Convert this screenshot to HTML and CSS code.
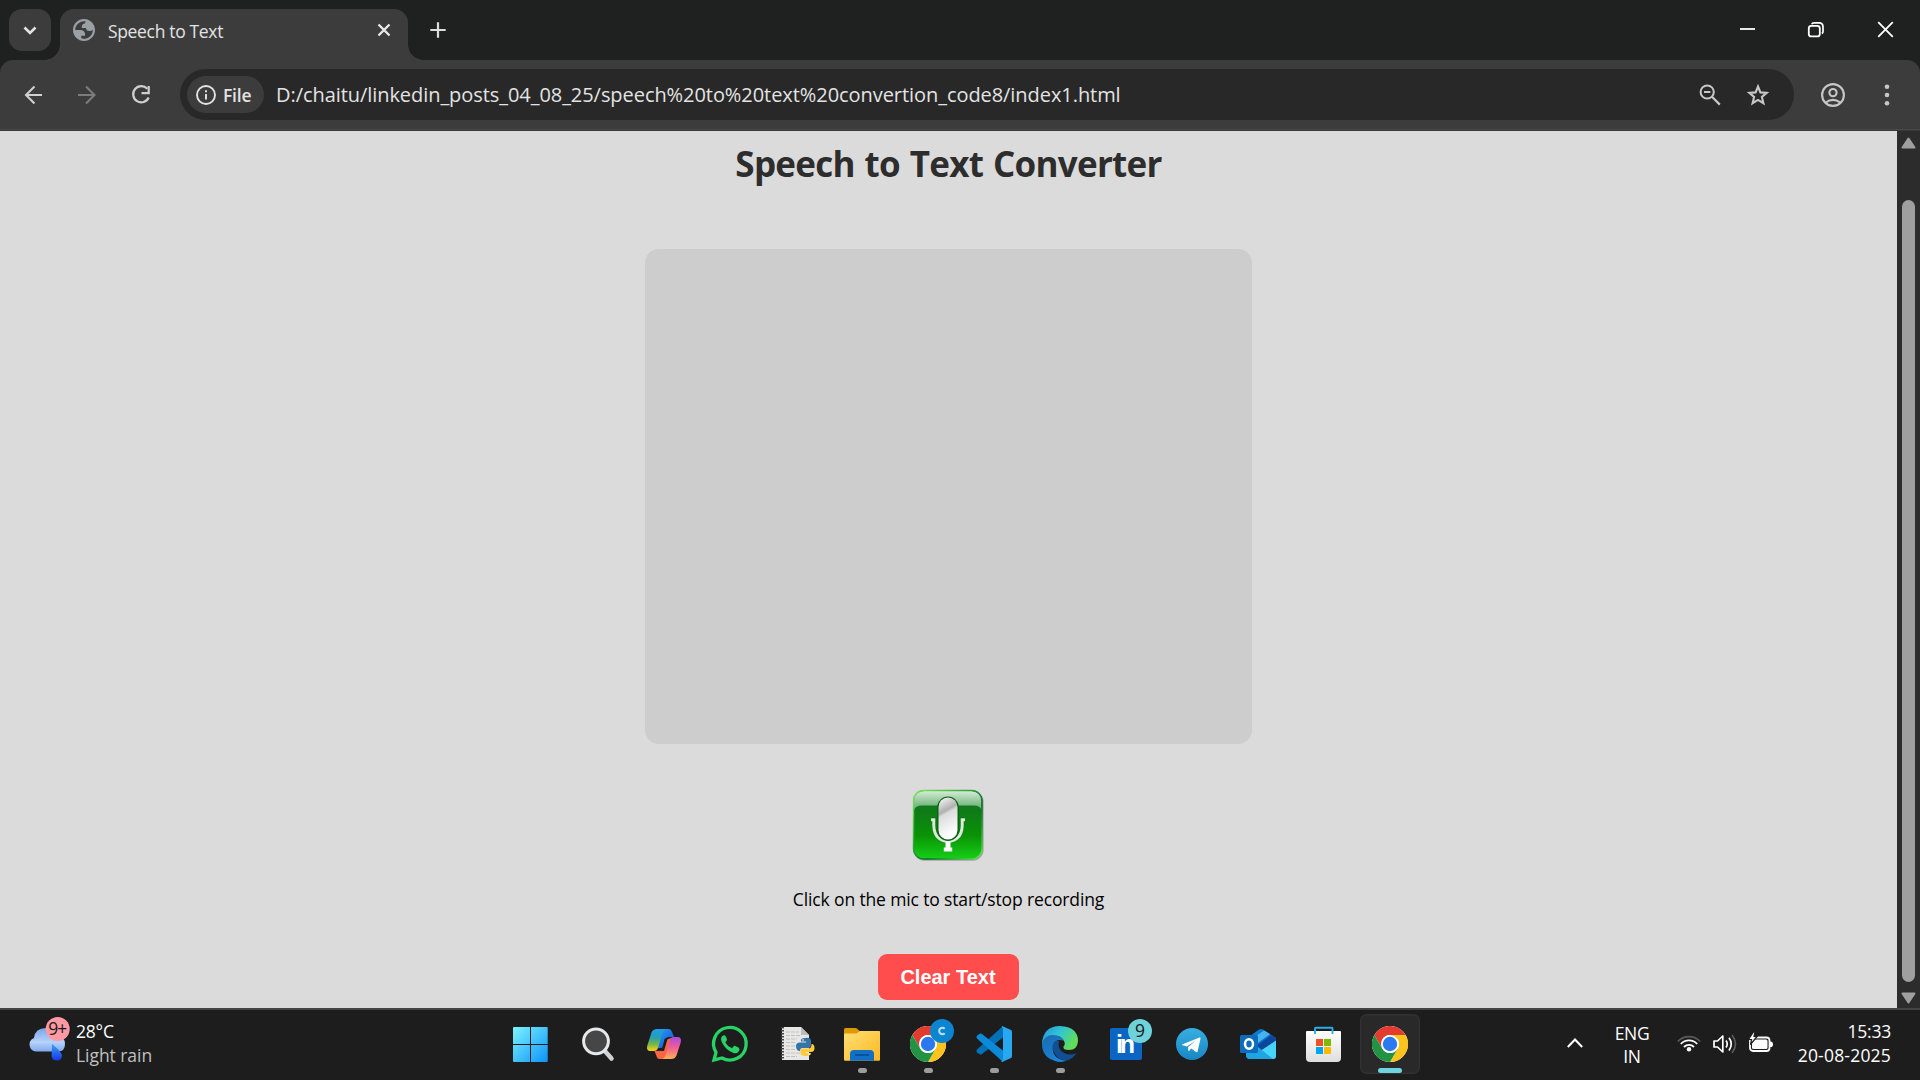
FILE: index.html
```html
<!DOCTYPE html>
<html lang="en">
<head>
<meta charset="utf-8">
<title>Speech to Text</title>
<link rel="stylesheet" href="styles.css">
</head>
<body>
<svg class="defs" width="0" height="0" aria-hidden="true">
  <defs>
    <linearGradient id="win" x1="0" y1="0" x2="1" y2="1"><stop offset="0" stop-color="#7cf3ff"/><stop offset="1" stop-color="#0c93f8"/></linearGradient>
    <symbol id="chrome" viewBox="0 0 48 48">
      <circle cx="24" cy="24" r="24" fill="#fff"/>
      <path d="M3.2 12A24 24 0 0 1 44.8 12H24A12 12 0 0 0 13.6 18L13.6 30Z" fill="#e33b2e"/>
      <path d="M44.8 12A24 24 0 0 1 24 48L34.4 30A12 12 0 0 0 34.4 18L24 12Z" fill="#fcc31c"/>
      <path d="M24 48A24 24 0 0 1 3.2 12L13.6 30A12 12 0 0 0 34.4 30Z" fill="#229342"/>
      <circle cx="24" cy="24" r="12" fill="#fff"/>
      <circle cx="24" cy="24" r="9.6" fill="#2a79ee"/>
    </symbol>
  </defs>
</svg>

<header class="tabstrip">
  <button class="tab-search" aria-label="Search tabs">
    <svg width="42" height="42" viewBox="0 0 42 42"><path d="M15.5 18.5L21 24L26.5 18.5" fill="none" stroke="#e3e3e3" stroke-width="2.6"/></svg>
  </button>
  <div class="tab">
    <svg class="globe" width="22" height="22" viewBox="2 2 20 20">
      <path d="M12 2C6.48 2 2 6.48 2 12s4.48 10 10 10 10-4.48 10-10S17.52 2 12 2zM4 12h4.400c3.407.022 4.922 1.730 4.543 5.127H9.488v2.470a8.004 8.004 0 0 0 10.498-8.083C19.327 12.504 18.332 13 17 13c-2.137 0-3.206-.916-3.206-2.750h-3.748c-.274-2.728.683-4.092 2.870-4.092 0-.975.327-1.597.811-1.970A8.004 8.004 0 0 0 4 12z" fill="#9aa0a6" fill-rule="evenodd"/>
    </svg>
    <span class="tab-title">Speech to Text</span>
    <svg class="tab-close" width="14" height="14" viewBox="0 0 14 14"><path d="M1.5 1.5L12.5 12.5M12.5 1.5L1.5 12.5" stroke="#e8e8e8" stroke-width="2.4"/></svg>
  </div>
  <svg class="new-tab" width="16" height="16" viewBox="0 0 16 16"><path d="M8 .3V15.7M.3 8H15.7" stroke="#dcdcdc" stroke-width="2.2"/></svg>
  <div class="window-controls">
    <svg width="69" height="60" viewBox="0 0 69 60"><path d="M27 29H42" stroke="#fff" stroke-width="1.8"/></svg>
    <svg width="69" height="60" viewBox="0 0 69 60"><rect x="26.800" y="25.800" width="11" height="10.600" rx="2.500" fill="none" stroke="#fff" stroke-width="1.800"/><path d="M29.800 24.200Q30.300 22.800 32 22.800H37Q41 22.800 41 27V31.500Q41 33 39.800 33.600" fill="none" stroke="#fff" stroke-width="1.700"/></svg>
    <svg width="69" height="60" viewBox="0 0 69 60"><path d="M27.200 22.200L41.800 36.800M41.800 22.200L27.200 36.800" stroke="#fff" stroke-width="1.800"/></svg>
  </div>
</header>

<nav class="toolbar">
  <svg class="nav-icon" width="54" height="51" viewBox="0 0 54 51"><path d="M34 26H18M26.500 17.500L18 26L26.500 34.500" fill="none" stroke="#d0d0d0" stroke-width="2.100"/></svg>
  <svg class="nav-icon" width="54" height="51" viewBox="0 0 54 51"><path d="M16 26H33M24 17.500L32.500 26L24 34.500" fill="none" stroke="#7c7c7c" stroke-width="2.100"/></svg>
  <svg class="nav-icon" width="54" height="51" viewBox="0 0 54 51"><path d="M32.300 19.800A8.100 8.100 0 1 0 33.700 28.500" fill="none" stroke="#d0d0d0" stroke-width="2.200"/><path d="M33.700 17V24.200H26.500" fill="none" stroke="#d0d0d0" stroke-width="2.200"/></svg>
  <div class="omnibox">
    <div class="chip">
      <svg width="20" height="20" viewBox="0 0 20 20"><circle cx="10" cy="10" r="9" fill="none" stroke="#e3e3e3" stroke-width="1.900"/><path d="M10 9V14.500M10 5.200V7.300" stroke="#e3e3e3" stroke-width="1.900"/></svg>
      <span>File</span>
    </div>
    <span class="url">D:/chaitu/linkedin_posts_04_08_25/speech%20to%20text%20convertion_code8/index1.html</span>
    <svg class="zoom-icon" width="22" height="22" viewBox="0 0 22 22"><circle cx="8.200" cy="8" r="6.600" fill="none" stroke="#c7c7c7" stroke-width="2"/><path d="M5 8H11.400M13 12.800L20.800 20.600" stroke="#c7c7c7" stroke-width="2.200"/></svg>
    <svg class="star-icon" width="24" height="24" viewBox="0 0 24 24"><path d="M12 3.500L14.400 9.400L20.700 9.900L15.900 14L17.400 20.200L12 16.900L6.600 20.200L8.100 14L3.300 9.900L9.600 9.400Z" fill="none" stroke="#c7c7c7" stroke-width="2.100"/></svg>
  </div>
  <svg class="profile" width="24" height="24" viewBox="0 0 24 24"><circle cx="12" cy="12" r="10.900" fill="none" stroke="#c7c7c7" stroke-width="2.100"/><circle cx="12" cy="9.600" r="3.600" fill="none" stroke="#c7c7c7" stroke-width="2.100"/><path d="M4.800 19.500Q12 14.200 19.200 19.500" fill="none" stroke="#c7c7c7" stroke-width="2.100"/></svg>
  <svg class="menu" width="6" height="24" viewBox="0 0 6 24"><g fill="#c7c7c7"><circle cx="3" cy="3.700" r="2.300"/><circle cx="3" cy="12" r="2.300"/><circle cx="3" cy="20.300" r="2.300"/></g></svg>
</nav>

<div class="viewport">
  <main class="page">
    <h1>Speech to Text Converter</h1>
    <div class="transcript"></div>
    <svg class="mic" width="74" height="74" viewBox="0 0 74 74">
      <defs>
        <linearGradient id="mg" x1="0" y1="0" x2="0" y2="1"><stop offset="0" stop-color="#137c28"/><stop offset=".3" stop-color="#0f7a18"/><stop offset=".65" stop-color="#0a9206"/><stop offset=".85" stop-color="#10b60e"/><stop offset="1" stop-color="#16d018"/></linearGradient>
        <linearGradient id="gloss" x1="0" y1="0" x2="0" y2="1"><stop offset="0" stop-color="#d4ecd6"/><stop offset="1" stop-color="#5da868"/></linearGradient>
        <linearGradient id="edge-line" x1="0" y1="0" x2="1" y2="1"><stop offset="0" stop-color="#7eea60"/><stop offset=".45" stop-color="#2c9a3c"/><stop offset=".6" stop-color="#0e6e2a"/><stop offset="1" stop-color="#62e458"/></linearGradient>
        <linearGradient id="capsule" x1="0" y1="0" x2=".25" y2="1"><stop offset="0" stop-color="#fff"/><stop offset=".38" stop-color="#b0b0b0"/><stop offset=".46" stop-color="#dcdcdc"/><stop offset="1" stop-color="#fff"/></linearGradient>
      </defs>
      <rect x="2.600" y="2.800" width="70" height="70" rx="11" fill="#777" opacity=".55"/>
      <rect x="2" y="2" width="69.400" height="69.400" rx="11" fill="url(#mg)"/>
      <path d="M3 22V13Q3 3 13 3H60.500Q70.500 3 70.500 13V22Q69 17.500 63 17.500H11Q4.500 17.500 3 22Z" fill="url(#gloss)"/>
      <rect x="2.500" y="2.500" width="68.500" height="68.500" rx="10.500" fill="none" stroke="url(#edge-line)" stroke-width="1.400"/>
      <path d="M20 31.500H23.500V37Q23.500 52.500 37 53.500Q50.500 52.500 50.500 37V31.500H54" fill="none" stroke="#075d0a" stroke-width="4" opacity=".5"/>
      <path d="M20 31.800H22.800V38Q23.500 52.500 37 53.500Q50.500 52.500 51.200 38V31.800H54" fill="none" stroke="#dce8da" stroke-width="3"/>
      <path d="M34.500 53H39.500V59.500H41.200V63.500H32.800V59.500H34.500Z" fill="#fafafa"/>
      <rect x="26.200" y="8.600" width="21.600" height="44.400" rx="10.800" fill="#0b6212"/>
      <rect x="27.500" y="9.500" width="19" height="42" rx="9.500" fill="url(#capsule)"/>
    </svg>
    <p>Click on the mic to start/stop recording</p>
    <button class="clear">Clear Text</button>
  </main>
  <aside class="scrollbar">
    <svg width="15" height="12" viewBox="0 0 15 12"><path d="M7.500 1.500L13.500 10.500H1.500Z" fill="#9f9f9f" stroke="#9f9f9f" stroke-width="2" stroke-linejoin="round"/></svg>
    <div class="thumb"></div>
    <svg width="15" height="12" viewBox="0 0 15 12"><path d="M7.500 10.500L13.500 1.500H1.500Z" fill="#9f9f9f" stroke="#9f9f9f" stroke-width="2" stroke-linejoin="round"/></svg>
  </aside>
</div>

<footer class="taskbar">
  <div class="weather">
    <svg width="46" height="50" viewBox="0 0 46 50">
      <defs>
        <linearGradient id="cloud" x1="0" y1="0" x2="0" y2="1"><stop offset="0" stop-color="#76a5ec"/><stop offset=".6" stop-color="#b8d2fa"/><stop offset="1" stop-color="#7fa9ee"/></linearGradient>
        <linearGradient id="drop" x1="0" y1="0" x2="0" y2="1"><stop offset="0" stop-color="#3ba0f8"/><stop offset="1" stop-color="#1539e8"/></linearGradient>
      </defs>
      <path d="M9 35.500A7 7 0 0 1 7 22Q8 12 19 12Q27 12 31 20Q38 21 38 28Q38 35.500 31 35.500Z" fill="url(#cloud)"/>
      <path d="M25 28Q35 36 35 40A5.300 5.300 0 0 1 24.500 40Q25 35 25 28Z" fill="url(#drop)"/>
      <circle cx="30.700" cy="13" r="12" fill="#ff99a4"/>
      <text class="badge-text" x="30.700" y="19" textLength="19">9+</text>
    </svg>
    <div class="weather-text"><span>28°C</span><span class="dim">Light rain</span></div>
  </div>

  <div class="apps">
    <svg class="app" viewBox="0 0 66 70"><path d="M15 17H31V34H14V18Q14 17 15 17ZM32 17H47.700Q48.700 17 48.700 18V34H32ZM14 35H31V52H15Q14 52 14 51ZM32 35H48.700V51Q48.700 52 47.700 52H32Z" fill="url(#win)"/></svg>
    <svg class="app" viewBox="0 0 66 70"><path d="M39 40L46.500 48.500" stroke="#cfd3d8" stroke-width="4.500" stroke-linecap="round"/><circle cx="31" cy="31.300" r="12.400" fill="#464646" stroke="#e6e8ea" stroke-width="3"/></svg>
    <svg class="app" viewBox="0 0 66 70">
      <defs>
        <linearGradient id="cp1" x1="0" y1="0" x2="0" y2="1"><stop offset="0" stop-color="#1b9cf0"/><stop offset=".4" stop-color="#2a9fae"/><stop offset=".7" stop-color="#79b743"/><stop offset="1" stop-color="#ffd21c"/></linearGradient>
        <linearGradient id="cp2" x1="0" y1="0" x2="0" y2="1"><stop offset="0" stop-color="#a64be4"/><stop offset=".45" stop-color="#ee5a9a"/><stop offset="1" stop-color="#ffae52"/></linearGradient>
        <linearGradient id="cp3" x1="0" y1="0" x2="1" y2="1"><stop offset="0" stop-color="#24a8f8"/><stop offset="1" stop-color="#1648d0"/></linearGradient>
      </defs>
      <path d="M25 19H37.500Q40 19 41 22L43 27H38Q35 27 34 30L31 38H24Z" fill="url(#cp3)"/>
      <path d="M41 49H28.500Q26 49 25.500 46L23.500 41H28Q31 41 32 37L34.500 30L43 27Z" fill="#fb6445"/>
      <path d="M33.500 29L37 27.500L33 41L29 41Q31 40 32 36Z" fill="#1d1d1d"/>
      <path d="M26 19H35Q32 20 31 24L27 38Q26 41 23 41H19.500Q15 41 16.300 35.500L20.500 22.500Q22 19 26 19Z" fill="url(#cp1)"/>
      <path d="M40 49H31Q34 48 35 44L39 30Q40 27 43 27H46.500Q51 27 49.700 32.500L45.500 45.500Q44 49 40 49Z" fill="url(#cp2)"/>
    </svg>
    <svg class="app" viewBox="0 0 66 70"><path d="M17 50L19 42.300A16.300 16.300 0 1 1 25 48Z" fill="none" stroke="#25d366" stroke-width="3.300"/><path d="M28.500 26Q27.800 25 26.700 25.300Q22.500 27 25 32.500Q29 40.500 36.500 43Q40.500 44 42.300 40.500Q43 38.300 41.500 37.500L38.300 36Q37.200 35.500 36.500 36.500L35 38.200Q30.500 36.500 28.300 32.500L29.700 30.500Q30.200 29.700 29.800 28.800Z" fill="#25d366"/></svg>
    <svg class="app" viewBox="0 0 66 70">
      <path d="M19 17H38L46 25V50H19Z" fill="#e7e7e5"/><path d="M38 17V25H46Z" fill="#bcbcbc"/>
      <path d="M23 22H36M23 25.500H38M23 29H34M23 32.500H33M23 36H35M23 39.500H33M23 43H37M23 46.500H34" stroke="#c2c2c2" stroke-dasharray="4 1"/>
      <path d="M19.500 17V50" stroke="#444" stroke-width="3" stroke-dasharray="1.500 1.500"/>
      <path d="M42 28Q48 27 48 31V35Q48 38 45 38H39.500Q37 38 37 41Q33 41 33 36Q33 32.500 37 32.500H43V31.500H38Q37 28 42 28Z" fill="#3474a8"/>
      <path d="M43 46Q37.500 46 37.500 43V40.500Q37.500 38.500 40 38.500H45.500Q48.500 38.500 48.500 34Q51.500 34 51.500 38Q51.500 42 48 42H43V43H48Q48 46 43 46Z" fill="#ffcb3a"/>
      <circle cx="40" cy="30" r=".8" fill="#fff"/><circle cx="46" cy="44" r=".8" fill="#fff"/>
    </svg>
    <svg class="app" viewBox="0 0 66 70">
      <defs><linearGradient id="fold" x1="0" y1="0" x2="1" y2="1"><stop offset="0" stop-color="#ffdf78"/><stop offset="1" stop-color="#fcb91c"/></linearGradient></defs>
      <path d="M15 19.500Q15 18 16.500 18H26Q27.500 18 28.500 19L30.500 21H50Q51 21 51 22V30H15Z" fill="#dd9a06"/>
      <path d="M15 24.500Q15 23.500 16 23.500H27.500L31 21H50Q51 21 51 22V49.500Q51 50.700 50 50.700H16Q15 50.700 15 49.500Z" fill="url(#fold)"/>
      <path d="M21 50.700V44Q21 40 25 40H41Q45 40 45 44V50.700Z" fill="#1170c6"/><path d="M26 45H40" stroke="#0a4a92" stroke-width="1.600"/>
      <rect x="29" y="58" width="9" height="5" rx="2.500" fill="#9d9d9d"/>
    </svg>
    <svg class="app" viewBox="0 0 66 70">
      <use href="#chrome" x="15" y="16" width="36" height="36"/>
      <circle cx="47" cy="21" r="12" fill="#0c84d0"/>
      <path d="M49.700 18.800A3.200 3.200 0 1 0 49.700 23.200" fill="none" stroke="#b9def5" stroke-width="2"/>
      <rect x="29" y="58" width="9" height="5" rx="2.500" fill="#9d9d9d"/>
    </svg>
    <svg class="app" viewBox="0 0 66 70">
      <path d="M42 16L16 39.500Q14.800 41 16 42.200L18.200 44Q19.500 45 21 44L42.500 27Z" fill="#0070b8"/>
      <path d="M42 52L16 28.500Q14.800 27 16 25.800L18.200 24Q19.500 23 21 24L42.500 41Z" fill="#0a8ad8"/>
      <path d="M41 16L50 20Q51 20.500 51 22V46Q51 47.500 50 48L41 52Q39.500 52 41.500 50Q42 49.500 42 48V20Q42 18.500 41.500 18Q40 16 41 16Z" fill="#28a8f0"/>
      <rect x="29" y="58" width="9" height="5" rx="2.500" fill="#9d9d9d"/>
    </svg>
    <svg class="app" viewBox="0 0 66 70">
      <defs>
        <linearGradient id="e1" x1="0" y1="0" x2="1" y2=".5"><stop offset="0" stop-color="#2093d8"/><stop offset=".5" stop-color="#32c4d4"/><stop offset="1" stop-color="#62de54"/></linearGradient>
        <linearGradient id="e2" x1="0" y1="0" x2=".6" y2="1"><stop offset="0" stop-color="#1a68b0"/><stop offset="1" stop-color="#1a86d8"/></linearGradient>
      </defs>
      <path d="M15 34Q16 16 33 16Q51 17 51 31Q50.500 40 42 40Q35.500 40 36.500 36.500Q39 34 36.500 30Q28 20 15 34Z" fill="url(#e1)"/>
      <path d="M15 34Q17 25 26 25Q34 25 37 31Q29 28 26 35Q24 50 40 50.500Q34 53 28 51Q15 47 15 34Z" fill="url(#e2)"/>
      <path d="M29 31Q24 34 26 40Q29 50 40 50.500Q46 48.500 49.500 43Q43 46 37 43Q30 39 32 31Z" fill="#114f94"/>
      <rect x="29" y="58" width="9" height="5" rx="2.500" fill="#9d9d9d"/>
    </svg>
    <svg class="app" viewBox="0 0 66 70">
      <rect x="17" y="18" width="32" height="32" rx="2" fill="#0a66c2"/>
      <text class="linkedin" x="23" y="43" textLength="19">in</text>
      <circle cx="47" cy="21" r="12" fill="#6fd2da"/>
      <text class="badge-text" x="47" y="27">9</text>
    </svg>
    <svg class="app" viewBox="0 0 66 70">
      <defs><linearGradient id="tg" x1="0" y1="0" x2="0" y2="1"><stop offset="0" stop-color="#37aee2"/><stop offset="1" stop-color="#1887c4"/></linearGradient></defs>
      <circle cx="33" cy="34" r="16" fill="url(#tg)"/><path d="M23 34.500L40.500 27.500Q41.700 27.300 41.500 28.700L38.600 41.500Q38 42.500 37 42L32.300 38.600L30 41Q29.300 41.300 29.200 40.300V37L37 30.500L27.800 36.500L23.500 35.200Q22.500 34.900 23 34.500Z" fill="#fff"/>
    </svg>
    <svg class="app" viewBox="0 0 66 70">
      <path d="M21 29L34 19.500Q36 18.500 38 19.500L51 28V46Q51 49 48 49H25Q21 49 21 45Z" fill="#0e77cf"/>
      <path d="M25 30L39 20.500L45 24L30 35Z" fill="#45b3ee"/><path d="M31 36L46 25L51 28V31L34 42Z" fill="#0c479d"/>
      <path d="M23 49L51 30.500V46Q51 49 48 49Z" fill="#46d4f8"/><path d="M33 37L48 49H25Q21 49 21 45V36Z" fill="#1fa4e4"/>
      <rect x="15" y="25" width="18" height="18" rx="1.500" fill="#0f6cbd"/><ellipse cx="24" cy="34" rx="4" ry="4.700" fill="none" stroke="#fff" stroke-width="2.500"/>
    </svg>
    <svg class="app" viewBox="0 0 66 70">
      <defs><linearGradient id="store" x1="0" y1="0" x2="0" y2="1"><stop offset="0" stop-color="#fff"/><stop offset="1" stop-color="#dedede"/></linearGradient></defs>
      <path d="M15 22Q15 21 16 21H49Q50 21 50 22V48Q50 52 46 52H19Q15 52 15 48Z" fill="url(#store)"/>
      <path d="M24 24V18.500Q24 17.800 24.700 17.800H40.800Q41.500 17.800 41.500 18.500V24" fill="none" stroke="#28afe8" stroke-width="1.900"/>
      <path d="M25 29H32V36H25Z" fill="#f25022"/><path d="M33 29H40V36H33Z" fill="#7fba00"/><path d="M25 37H32V44H25Z" fill="#00a4ef"/><path d="M33 37H40V44H33Z" fill="#ffb900"/>
    </svg>
    <svg class="app" viewBox="0 0 66 70">
      <rect x="3.700" y="4.700" width="58.600" height="58.600" rx="6" fill="#292929" stroke="#323232" stroke-width="1.400"/>
      <use href="#chrome" x="15" y="16" width="36" height="36"/>
      <rect x="21" y="58" width="24" height="5" rx="2.500" fill="#6dd3dc"/>
    </svg>
  </div>

  <div class="tray">
    <svg class="chevron" width="16" height="10" viewBox="0 0 16 10"><path d="M.8 9L8 1.500L15.200 9" fill="none" stroke="#fff" stroke-width="2"/></svg>
    <div class="lang"><span>ENG</span><span>IN</span></div>
    <svg class="wifi" width="24" height="22" viewBox="0 0 24 22"><g fill="none" stroke-width="1.800"><path d="M.8 9.500A15.300 15.300 0 0 1 23.200 9.500" stroke="#5a5a5a"/><path d="M3.800 12A11.300 11.300 0 0 1 20.200 12M7 15A7 7 0 0 1 17 15" stroke="#fff"/></g><circle cx="12" cy="17.300" r="2.200" fill="#fff"/></svg>
    <svg class="speaker" width="24" height="22" viewBox="0 0 24 22"><path d="M1 8H4.500L9.800 3V19L4.500 14H1Z" fill="none" stroke="#fff" stroke-width="1.700" stroke-linejoin="round"/><path d="M13 7.500Q15.500 11 13 14.500M16 4.800Q20.500 11 16 17.500" fill="none" stroke="#fff" stroke-width="1.700"/><path d="M19 2Q26 11 19 20" fill="none" stroke="#5a5a5a" stroke-width="1.700"/></svg>
    <svg class="battery" width="24" height="22" viewBox="0 0 24 22"><rect x="1" y="5.500" width="19.500" height="13.500" rx="3" fill="none" stroke="#fff" stroke-width="1.800"/><rect x="3" y="7.500" width="15.500" height="9.500" rx="1.500" fill="#fff"/><path d="M21 9.500H22Q24 9.500 24 12.200Q24 15 22 15H21Z" fill="#fff"/><path d="M4.500 0L-.5 7.500H2.500L1.500 12.500L8 4.500H5L6 0Z" fill="#fff" stroke="#1d1d1d" stroke-width="1.200"/></svg>
    <div class="clock"><span class="time">15:33</span><span class="date">20-08-2025</span></div>
  </div>
</footer>
</body>
</html>
```

FILE: styles.css
```css
* { box-sizing: border-box; }

body {
  margin: 0;
  width: 1920px;
  height: 1080px;
  overflow: hidden;
  display: flex;
  flex-direction: column;
  background: #1f2120;
  font-family: "Open Sans", "Noto Sans", sans-serif;
  font-size: 17.5px;
}

svg { display: block; flex: none; }
.defs { position: absolute; }
button { border: 0; padding: 0; }
span { white-space: nowrap; }

.tabstrip { height: 60px; display: flex; align-items: flex-start; padding: 9px 0 0 9px; }
.tab-search { width: 42px; height: 42px; border-radius: 13px; background: #3c3c3c; }
.tab {
  position: relative;
  width: 348px;
  height: 51px;
  margin-left: 9px;
  padding: 0 17px 0 13px;
  display: flex;
  align-items: center;
  background: #3c3c3c;
  border-radius: 14px 14px 0 0;
}
.tab::before, .tab::after {
  content: "";
  position: absolute;
  bottom: 0;
  width: 15px;
  height: 15px;
}
.tab::before { right: 100%; background: radial-gradient(circle at 0 0, transparent 14.5px, #3c3c3c 15px); }
.tab::after { left: 100%; background: radial-gradient(circle at 100% 0, transparent 14.5px, #3c3c3c 15px); }
.globe { margin-top: -9px; }
.tab-title { margin: -7px 0 0 13px; color: #e3e3e3; letter-spacing: -0.34px; }
.tab-close { margin: -9px 0 0 auto; }
.new-tab { margin: 13px 0 0 22px; }
.window-controls { display: flex; margin: -9px 0 0 auto; }

.toolbar {
  height: 71px;
  padding: 9px 30px 0 6px;
  display: flex;
  background: #3c3c3c;
  border-radius: 13px 13px 0 0;
  box-shadow: inset 0 -1px #3a3838, inset 0 -2px #484848;
}
.nav-icon:nth-child(1) { margin-left: 2px; }
.nav-icon:nth-child(3) { margin-left: -1px; }
.omnibox {
  width: 1614px;
  height: 51px;
  margin-left: 11px;
  padding: 0 24px 0 7px;
  display: flex;
  align-items: center;
  background: #282828;
  border-radius: 26px;
}
.chip {
  width: 77px;
  height: 37px;
  padding-left: 9px;
  display: flex;
  align-items: center;
  gap: 7px;
  border-radius: 19px;
  background: #3c3c3c;
  color: #e3e3e3;
  font-size: 17.5px;
  font-weight: 600;
  letter-spacing: -0.2px;
}
.url { margin-left: 12px; color: #e3e3e3; font-size: 20px; letter-spacing: -0.06px; }
.zoom-icon { margin-left: auto; }
.star-icon { margin-left: 25px; }
.profile { margin: 14px 0 0 27px; }
.menu { margin: 14px 0 0 auto; }

.viewport { height: 877px; display: flex; }
.page {
  flex: 1;
  display: flex;
  flex-direction: column;
  align-items: center;
  background: #dbdbdb;
}
.page h1 {
  margin: 9px 0 0;
  font-size: 35px;
  line-height: 48px;
  font-weight: 700;
  color: #2d2d2d;
  letter-spacing: -0.74px;
  word-spacing: 1.5px;
}
.transcript { width: 607px; height: 495px; margin-top: 61px; border-radius: 14px; background: #cdcdcd; }
.mic { margin: 44px 1px 0 0; }
.page p { margin: 24px 0 0; line-height: 26px; color: #000; letter-spacing: -0.14px; }
.clear {
  width: 141px;
  height: 46px;
  margin-top: 42px;
  padding-right: 1px;
  border-radius: 9px;
  background: #ff4d4d;
  color: #fff;
  font: bold 20px "Liberation Sans", Arial, sans-serif;
}
.scrollbar { width: 23px; padding: 6px 0 4px; display: flex; flex-direction: column; align-items: center; background: #2c2c2c; }
.thumb { width: 13px; height: 782px; margin: 51px 0 10px; border-radius: 7px; background: #9f9f9f; }

.taskbar {
  height: 72px;
  display: flex;
  background: #1d1d1d;
  border-top: 2px solid #444;
  color: #fff;
}
.taskbar span { line-height: 24px; }
.weather { width: 499px; display: flex; padding: 6px 0 0 27px; }
.weather-text { display: flex; flex-direction: column; margin: 3px 0 0 3px; letter-spacing: -0.2px; }
.weather-text .dim { color: #c0c0c0; letter-spacing: -0.05px; }
.badge-text { font-size: 17.5px; fill: #191919; text-anchor: middle; }
.linkedin { font-family: "Liberation Sans", Arial, sans-serif; font-size: 25px; font-weight: 700; fill: #fff; }
.apps { display: flex; }
.app { width: 66px; height: 70px; }
.tray { flex: 1; display: flex; padding-right: 29px; }
.chevron { margin: 28px 0 0 144px; }
.lang { width: 66px; margin-top: 11px; display: flex; flex-direction: column; align-items: center; margin-left: 16px; letter-spacing: -0.3px; }
.lang span:last-child { line-height: 22px; }
.wifi { margin: 22px 0 0 12px; }
.speaker { margin: 23px 0 0 12px; }
.battery { margin: 22px 0 0 12px; overflow: visible; }
.clock { margin: 9px 0 0 auto; display: flex; flex-direction: column; align-items: flex-end; letter-spacing: -0.2px; }
.date { letter-spacing: 0.2px; }
```
